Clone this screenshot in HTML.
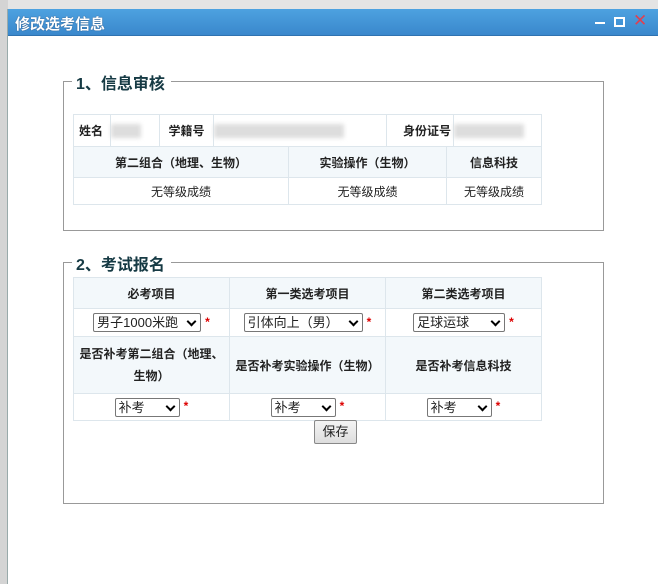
<!DOCTYPE html>
<html><head><meta charset="utf-8"><style>
*{margin:0;padding:0;box-sizing:border-box}
body{width:658px;height:584px;background:#fff;position:relative;overflow:hidden;font-family:"Liberation Sans","Noto Sans CJK SC",sans-serif;font-size:12px;color:#222}
.bgl{position:absolute;left:0;top:0;width:8px;height:584px;background:#d4d4d4}
.bgt{position:absolute;left:0;top:0;width:658px;height:9px;background:#e4e4e4}
.win{position:absolute;left:7px;top:9px;width:651px;height:575px;background:#fff;border-left:1px solid #9aa}
.tb{position:absolute;left:0;top:0;width:651px;height:27px;background:linear-gradient(#4da2e0,#3a88cc);border-bottom:1px solid #2f72b0}
.tb span{position:absolute;left:7px;top:4px;color:#fff;font-size:15px;font-weight:bold;text-shadow:0 0 1px #235}
.fs{position:absolute;left:55px;width:541px;border:1px solid #999}
.lg{position:absolute;left:8px;top:-12px;background:#fff;padding:0 6px 0 4px;font-size:16px;font-weight:bold;color:#163a44}
table{position:absolute;border-collapse:collapse}
td{border:1px solid #dde6ec;text-align:center;font-size:12px}
.h td{background:#f3f8fb;font-weight:bold}
.sel{display:inline-block;border:1px solid #777;border-radius:2px;height:19px;line-height:17px;font-size:13px;text-align:left;padding-left:3px;position:relative;vertical-align:middle;background:#fff}
.sel:after{content:"";position:absolute;right:5px;top:4px;width:5px;height:5px;border-right:2px solid #000;border-bottom:2px solid #000;transform:rotate(45deg)}
.r{color:#d00;font-weight:bold;margin-left:4px}
.blur{display:inline-block;height:14px;background:#ddd;filter:blur(2px);vertical-align:middle}
</style></head><body>
<div class="bgt"></div><div class="bgl"></div>
<div class="win">
<div class="tb"><span>修改选考信息</span>
<div style="position:absolute;left:587px;top:13px;width:10px;height:2px;background:#fff"></div>
<div style="position:absolute;left:606px;top:8px;width:11px;height:10px;border:2px solid #fff"></div>
<div style="position:absolute;left:625px;top:2px;color:#e04050;font-size:17px">✕</div>
</div>
<div class="fs" style="top:72px;height:150px"><div class="lg">1、信息审核</div></div>
<div class="fs" style="top:253px;height:242px"><div class="lg">2、考试报名</div></div>
<table style="left:65px;top:105px;width:469px">
<tr style="height:32px"><td style="width:37px;font-weight:bold;text-align:left;padding-left:5px">姓名</td><td style="width:49px;text-align:left"><span class="blur" style="width:30px"></span></td><td style="width:54px;font-weight:bold">学籍号</td><td style="width:173px;text-align:left"><span class="blur" style="width:130px"></span></td><td style="width:67px;font-weight:bold;text-align:right;padding-right:2px">身份证号</td><td style="text-align:left"><span class="blur" style="width:70px"></span></td></tr>
</table>
<table style="left:65px;top:137px;width:469px">
<tr class="h" style="height:31px"><td style="width:215px">第二组合（地理、生物）</td><td style="width:158px">实验操作（生物）</td><td>信息科技</td></tr>
<tr style="height:27px"><td>无等级成绩</td><td>无等级成绩</td><td>无等级成绩</td></tr>
</table>
<table style="left:65px;top:268px;width:469px">
<tr class="h" style="height:31px"><td style="width:156px">必考项目</td><td style="width:156px">第一类选考项目</td><td>第二类选考项目</td></tr>
<tr style="height:28px"><td><span class="sel" style="width:108px">男子1000米跑</span><span class="r">*</span></td><td><span class="sel" style="width:119px">引体向上（男）</span><span class="r">*</span></td><td><span class="sel" style="width:92px">足球运球</span><span class="r">*</span></td></tr>
<tr class="h" style="height:57px"><td style="line-height:22px">是否补考第二组合（地理、<br>生物）</td><td>是否补考实验操作（生物）</td><td>是否补考信息科技</td></tr>
<tr style="height:27px"><td><span class="sel" style="width:65px">补考</span><span class="r">*</span></td><td><span class="sel" style="width:65px">补考</span><span class="r">*</span></td><td><span class="sel" style="width:65px">补考</span><span class="r">*</span></td></tr>
</table>
<div style="position:absolute;left:306px;top:411px;width:43px;height:24px;border:1px solid #888;border-radius:2px;background:linear-gradient(#f4f4f4,#ddd);text-align:center;line-height:22px;font-size:13px">保存</div>
</div>
</body></html>
